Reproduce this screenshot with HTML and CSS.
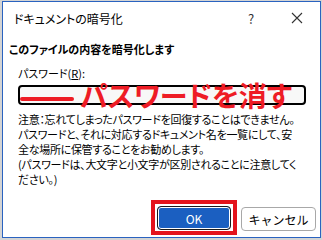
FILE: index.html
```html
<!DOCTYPE html>
<html lang="ja">
  <head>
    <meta charset="utf-8">
    <title>ドキュメントの暗号化</title>
    <link rel="stylesheet" href="styles.css">
  </head>
  <body>
    <div class="window">
      <!-- Title bar -->
      <div class="title-bar">
        <span class="title">ドキュメントの暗号化</span>
        <span class="title-button">?</span>
        <span class="title-button close">
          <svg width="12" height="12" viewBox="0 0 12 12">
            <path d="M1 1 L11 11 M11 1 L1 11" stroke="#333" stroke-width="1.1" fill="none" />
          </svg>
        </span>
      </div>

      <p class="heading">このファイルの内容を暗号化します</p>

      <div class="content">
        <p class="label">パスワード(<u>R</u>):</p>
        <div class="field">
          <div class="password-input"></div>
          <!-- Annotation over the input -->
          <div class="strike-line"></div>
          <div class="note-red">パスワードを消す</div>
        </div>
        <p class="note">
          注意：忘れてしまったパスワードを回復することはできません。<br>
          パスワードと、それに対応するドキュメント名を一覧にして、安<br>
          全な場所に保管することをお勧めします。<br>
          (パスワードは、大文字と小文字が区別されることに注意してく<br>
          ださい。)
        </p>
      </div>

      <div class="footer">
        <div class="highlight">
          <button class="ok-button">OK</button>
        </div>
        <button class="cancel-button">キャンセル</button>
      </div>
    </div>
  </body>
</html>
```

FILE: styles.css
```css
body {
  margin: 0;
  background-color: #d4d4d4;
  font-family: "Noto Sans CJK JP", "Noto Sans", sans-serif;
  font-feature-settings: "palt";
  color: #000;
}
p {
  margin: 0;
}
.window {
  margin: 1px 1px 0 2px;
  height: 237px;
  box-sizing: border-box;
  border: 1px solid #2a63c0;
  background-color: white;
}
.title-bar {
  display: flex;
  align-items: center;
  height: 32px;
  padding-left: 11px;
}
.title {
  flex: 1;
  font-size: 12px;
}
.title-button {
  width: 46px;
  text-align: center;
  font-size: 13px;
  color: #333;
}
.close svg {
  display: block;
  margin: 0 auto;
}
.heading {
  margin-top: 7px;
  padding-left: 6px;
  font-size: 11px;
  font-weight: bold;
  line-height: 16px;
}
.content {
  padding-left: 15px;
}
.label {
  margin-top: 8px;
  font-size: 11px;
  line-height: 16px;
}
.field {
  position: relative;
  margin-top: 4px;
  width: 288px;
}
.password-input {
  height: 20px;
  box-sizing: border-box;
  border: 2px solid #000;
  border-radius: 4px;
  background-color: #f8f8f8;
}
.strike-line {
  position: absolute;
  left: 2px;
  top: 12px;
  width: 54px;
  height: 4px;
  border-radius: 2px;
  background-color: #ee1c25;
}
.note-red {
  position: absolute;
  left: 62px;
  top: -5px;
  font-size: 28px;
  font-weight: bold;
  line-height: 30px;
  white-space: nowrap;
  color: #ee1c25;
}
.note {
  margin-top: 7px;
  font-size: 11px;
  line-height: 15px;
  letter-spacing: -0.3px;
  white-space: nowrap;
}
.footer {
  display: flex;
  justify-content: flex-end;
  align-items: flex-start;
  margin-top: 13px;
  padding-right: 4px;
}
.highlight {
  border: 4px solid #e3131c;
  padding: 2px 2px 1px;
}
.ok-button,
.cancel-button {
  width: 74px;
  height: 24px;
  font-family: "Noto Sans CJK JP", "Noto Sans", sans-serif;
  font-size: 12px;
  border-radius: 4px;
  padding: 0;
}
.ok-button {
  display: block;
  background-color: #1b5fc1;
  color: white;
  border: 1px solid #1a1a1a;
  box-shadow: inset 0 0 0 1px white;
}
.cancel-button {
  margin-top: 7px;
  margin-left: 4px;
  width: 75px;
  background-color: white;
  border: 1px solid #a8a8a8;
  color: #000;
}
```
